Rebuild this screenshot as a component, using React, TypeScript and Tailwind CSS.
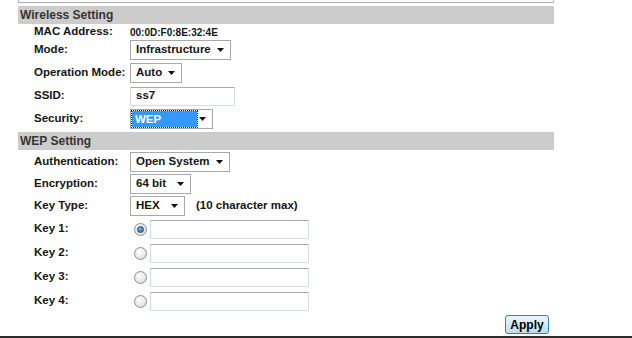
import React from "react";

const Caret = () => (
  <svg width="7" height="4" viewBox="0 0 7 4" className="shrink-0">
    <path d="M0 0h7L3.5 4z" fill="#111" />
  </svg>
);

const Select = ({ value, w, picked }: { value: string; w: string; picked?: boolean }) => (
  <div className={`${w} h-[20px] border border-[#a9a9a9] bg-white flex items-center justify-between pr-[6px]`}>
    {picked ? (
      <span className="ml-[1px] h-[16px] w-[65px] bg-[#3399ff] text-white pl-[3px] leading-[16px] outline-1 outline-dotted outline-[#222]">
        {value}
      </span>
    ) : (
      <span className="pl-[5px]">{value}</span>
    )}
    <Caret />
  </div>
);

const Field = ({ w, value }: { w: string; value?: string }) => (
  <div className={`${w} h-[19px] border border-[#d6dbe1] border-t-[#a9abb1] bg-white flex items-center pl-[5px]`}>
    {value}
  </div>
);

const Radio = ({ checked }: { checked?: boolean }) => (
  <div className="w-[13px] h-[13px] rounded-full border border-[#8f8f8f] bg-[radial-gradient(circle_at_40%_35%,#ffffff,#d4d4d4)] flex items-center justify-center shrink-0">
    {checked && (
      <div className="w-[7px] h-[7px] rounded-full bg-[radial-gradient(circle_at_40%_35%,#6cc3f0,#1a5a8c)] border border-[#144a72]" />
    )}
  </div>
);

const Row = ({ label, children, h = "h-[20px]" }: { label: string; children: React.ReactNode; h?: string }) => (
  <div className={`flex items-center ${h} pl-[34px]`}>
    <div className="w-[96px] shrink-0">{label}</div>
    {children}
  </div>
);

const Header = ({ title }: { title: string }) => (
  <div className="ml-[18px] w-[536px] h-[18px] bg-[#cccccc] pl-[2px] text-[12px] leading-[18px] text-[#353535]">{title}</div>
);

export default function App() {
  const keys = [1, 2, 3, 4];
  return (
    <div className="w-[632px] h-[338px] bg-white flex flex-col text-[11.5px] font-bold text-[#151515] overflow-hidden [font-family:'Liberation_Sans',Arial,sans-serif]">
      <div className="ml-[18px] w-[536px] h-[3px] border border-t-0 border-[#b0b0b0]" />
      <div className="mt-[3px]">
        <Header title="Wireless Setting" />
      </div>
      <Row label="MAC Address:" h="h-[16px]">
        <span className="text-[10px]">00:0D:F0:8E:32:4E</span>
      </Row>
      <div className="flex flex-col gap-[3px]">
        <Row label="Mode:">
          <Select value="Infrastructure" w="w-[101px]" />
        </Row>
        <Row label="Operation Mode:">
          <Select value="Auto" w="w-[52px]" />
        </Row>
        <Row label="SSID:">
          <Field w="w-[105px]" value="ss7" />
        </Row>
        <Row label="Security:">
          <Select value="WEP" w="w-[83px]" picked />
        </Row>
      </div>
      <div className="mt-[3px]">
        <Header title="WEP Setting" />
      </div>
      <div className="mt-[2px] flex flex-col gap-[2px]">
        <Row label="Authentication:">
          <Select value="Open System" w="w-[100px]" />
        </Row>
        <Row label="Encryption:">
          <Select value="64 bit" w="w-[61px]" />
        </Row>
        <Row label="Key Type:">
          <Select value="HEX" w="w-[55px]" />
          <span className="ml-[11px]">(10 character max)</span>
        </Row>
      </div>
      <div className="mt-[3px] flex flex-col gap-[4px]">
        {keys.map((k) => (
          <Row key={k} label={`Key ${k}:`}>
            <div className="ml-[4px] mr-[3px]">
              <Radio checked={k === 1} />
            </div>
            <Field w="w-[159px]" />
          </Row>
        ))}
      </div>
      <div className="mt-[4px] flex">
        <button className="ml-[505px] w-[44px] h-[19px] rounded-[3px] border border-[#3c7fb1] bg-gradient-to-b from-[#eef6fc] to-[#bcdcf0] text-[12px] font-bold text-black leading-none">
          Apply
        </button>
      </div>
      <div className="mt-[2px] h-[2px] bg-[#2b2b2b]" />
    </div>
  );
}
